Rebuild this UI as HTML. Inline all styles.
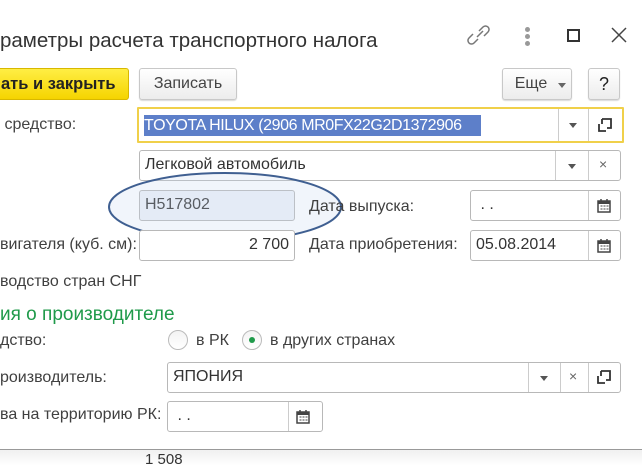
<!DOCTYPE html>
<html><head><meta charset="utf-8"><style>
*{box-sizing:border-box;margin:0;padding:0}
body{width:642px;height:466px;background:#fff;position:relative;overflow:hidden;font-family:"Liberation Sans","Noto Sans CJK SC",sans-serif;color:#404040;font-size:16px}
.a{position:absolute;white-space:nowrap}
.f{position:absolute;border:1px solid #b8b8b8;border-radius:3px;background:#fff}
.btn{position:absolute;border:1px solid #c8c8c8;border-radius:3px;background:linear-gradient(#fff,#ececec);box-shadow:0 1px 1px rgba(0,0,0,.15);font-size:16px;color:#444;text-align:center;line-height:30px}
.sep{position:absolute;top:0;bottom:0;border-left:1px solid #ccc}
.dd{position:absolute;width:0;height:0;border-left:4px solid transparent;border-right:4px solid transparent;border-top:5px solid #555}
.t{position:absolute;font-size:16px;color:#333;top:5px;left:5px}
</style></head><body>
<div class="a" style="left:0;top:29px;font-size:20.5px;color:#333">раметры расчета транспортного налога</div>
<svg class="a" style="left:466px;top:22px" width="30" height="26" viewBox="0 0 30 26"><g fill="none" stroke="#777" stroke-width="1.5"><path d="M13 9 l4-4 a3 3 0 0 1 5 5 l-4 4"/><path d="M12 17 l-4 4 a3 3 0 0 1 -5 -5 l4 -4"/><path d="M11 15 l6 -6"/></g></svg>
<div class="a" style="left:525px;top:27px;width:5px;height:5px;border-radius:50%;background:#999"></div>
<div class="a" style="left:525px;top:34px;width:5px;height:5px;border-radius:50%;background:#999"></div>
<div class="a" style="left:525px;top:41px;width:5px;height:5px;border-radius:50%;background:#999"></div>
<div class="a" style="left:567px;top:29px;width:13px;height:13px;border:2px solid #333"></div>
<svg class="a" style="left:611px;top:27px" width="16" height="16"><path d="M1 1L15 15M15 1L1 15" stroke="#444" stroke-width="1.5"/></svg>

<div class="a" style="left:-8px;top:68px;width:137px;height:32px;border:1px solid #d8b800;border-radius:3px;background:linear-gradient(#ffee44,#f5d400);font-weight:bold;font-size:16.5px;color:#222;line-height:30px;padding-left:8px">ать и закрыть</div>
<div class="btn" style="left:139px;top:68px;width:98px;height:32px">Записать</div>
<div class="btn" style="left:502px;top:68px;width:70px;height:32px;padding-right:12px">Еще<span class="dd" style="left:55px;top:14px;border-top-color:#666"></span></div>
<div class="btn" style="left:588px;top:68px;width:32px;height:32px;font-size:18px;color:#222">?</div>

<div class="a" style="left:0;top:116px;color:#444">&nbsp;средство:</div>
<div class="f" style="left:137px;top:107px;width:487px;height:36px;border:2px solid #f0d04a;border-radius:1px">
<div class="a" style="left:5px;top:6px;height:21px;width:337px;background:#5d7fc9;color:#fff;font-size:16px;line-height:21px;letter-spacing:-0.4px">TOYOTA HILUX (2906 MR0FX22G2D1372906</div>
<div class="sep" style="left:419px"></div><div class="sep" style="left:449px"></div>
<div class="dd" style="left:430px;top:14px"></div>
<svg class="a" style="left:458px;top:8px" width="16" height="16"><path d="M5 2h9v9h-4M5 2v5M2 7v7h7" fill="none" stroke="#333" stroke-width="1.8"/></svg>
</div>

<div class="f" style="left:139px;top:150px;width:482px;height:31px">
<div class="t">Легковой автомобиль</div>
<div class="sep" style="left:415px"></div><div class="sep" style="left:448px"></div>
<div class="dd" style="left:428px;top:13px"></div>
<div class="a" style="left:459px;top:5px;font-size:14px;color:#666">×</div>
</div>

<div class="f" style="left:139px;top:190px;width:156px;height:31px;background:#eef2f8">
<div class="t">Н517802</div></div>
<svg class="a" style="left:105px;top:170px" width="240" height="75"><ellipse cx="120" cy="37" rx="116" ry="34" fill="rgba(200,215,240,0.25)" stroke="#3f5f91" stroke-width="2"/></svg>
<div class="a" style="left:309px;top:198px">Дата выпуска:</div>
<div class="f" style="left:470px;top:190px;width:151px;height:31px"><div class="t">&nbsp;. .</div><div class="sep" style="left:117px"></div>
<svg class="a" style="left:126px;top:7px" width="14" height="15"><rect x="1" y="3" width="12" height="11" fill="none" stroke="#444" stroke-width="1.5"/><rect x="1" y="3" width="12" height="3" fill="#444"/><path d="M4 1v3M10 1v3" stroke="#444" stroke-width="1.5"/><path d="M3.5 8h2M6.5 8h2M9.5 8h2M3.5 11h2M6.5 11h2M9.5 11h2" stroke="#444"/></svg></div>

<div class="a" style="left:0;top:236px">вигателя (куб. см):</div>
<div class="f" style="left:139px;top:230px;width:156px;height:31px"><div class="a" style="right:5px;top:5px;color:#333">2 700</div></div>
<div class="a" style="left:309px;top:236px">Дата приобретения:</div>
<div class="f" style="left:470px;top:230px;width:151px;height:31px"><div class="t">05.08.2014</div><div class="sep" style="left:117px"></div>
<svg class="a" style="left:126px;top:7px" width="14" height="15"><rect x="1" y="3" width="12" height="11" fill="none" stroke="#444" stroke-width="1.5"/><rect x="1" y="3" width="12" height="3" fill="#444"/><path d="M4 1v3M10 1v3" stroke="#444" stroke-width="1.5"/><path d="M3.5 8h2M6.5 8h2M9.5 8h2M3.5 11h2M6.5 11h2M9.5 11h2" stroke="#444"/></svg></div>

<div class="a" style="left:0;top:273px">водство стран СНГ</div>
<div class="a" style="left:0;top:304px;font-size:19px;color:#1f9a4a">ия о производителе</div>
<div class="a" style="left:0;top:332px">дство:</div>
<div class="a" style="left:168px;top:330px;width:20px;height:20px;border:1px solid #bbb;border-radius:50%;background:linear-gradient(#f3f3f3,#fff)"></div>
<div class="a" style="left:196px;top:332px">в РК</div>
<div class="a" style="left:242px;top:330px;width:20px;height:20px;border:1px solid #bbb;border-radius:50%;background:linear-gradient(#f3f3f3,#fff)"><div class="a" style="left:6px;top:6px;width:6px;height:6px;border-radius:50%;background:#1f9a4a"></div></div>
<div class="a" style="left:270px;top:332px">в других странах</div>

<div class="a" style="left:0;top:369px">роизводитель:</div>
<div class="f" style="left:167px;top:362px;width:454px;height:31px"><div class="t">ЯПОНИЯ</div>
<div class="sep" style="left:360px"></div><div class="sep" style="left:392px"></div><div class="sep" style="left:420px"></div>
<div class="dd" style="left:372px;top:13px"></div>
<div class="a" style="left:401px;top:5px;font-size:14px;color:#666">×</div>
<svg class="a" style="left:428px;top:6px" width="16" height="16"><path d="M5 2h9v9h-4M5 2v5M2 7v7h7" fill="none" stroke="#333" stroke-width="1.8"/></svg></div>

<div class="a" style="left:0;top:406px">ва на территорию РК:</div>
<div class="f" style="left:167px;top:401px;width:156px;height:31px"><div class="t">&nbsp;. .</div><div class="sep" style="left:120px"></div>
<svg class="a" style="left:128px;top:7px" width="14" height="15"><rect x="1" y="3" width="12" height="11" fill="none" stroke="#444" stroke-width="1.5"/><rect x="1" y="3" width="12" height="3" fill="#444"/><path d="M4 1v3M10 1v3" stroke="#444" stroke-width="1.5"/><path d="M3.5 8h2M6.5 8h2M9.5 8h2M3.5 11h2M6.5 11h2M9.5 11h2" stroke="#444"/></svg></div>

<div class="a" style="left:0;top:449px;width:642px;height:1px;background:#999"></div>
<div class="a" style="left:0;top:450px;width:642px;height:16px;background:linear-gradient(#f0f0f0,#fff)"></div>
<div class="a" style="left:145px;top:451px;font-size:15px;color:#333">1 508</div>
</body></html>
